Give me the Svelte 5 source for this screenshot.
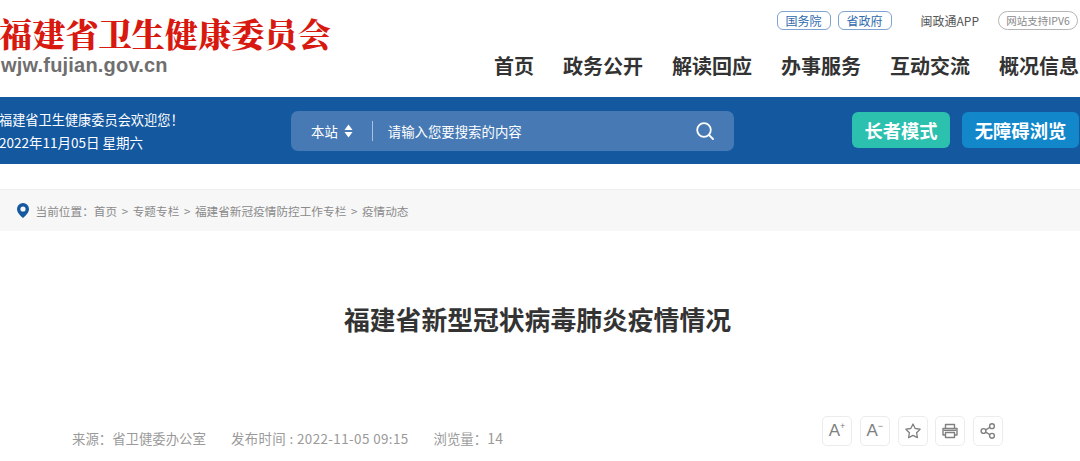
<script>
  const nav = ['首页', '政务公开', '解读回应', '办事服务', '互动交流', '概况信息'];
  const crumbs = ['首页', '专题专栏', '福建省新冠疫情防控工作专栏', '疫情动态'];
</script>

<div class="page">
  <header class="head">
    <div class="logo">
      <div class="logo-cn">福建省卫生健康委员会</div>
      <div class="logo-en">wjw.fujian.gov.cn</div>
    </div>
    <div class="head-right">
      <div class="toplinks">
        <span class="pill blue">国务院</span>
        <span class="pill blue second">省政府</span>
        <span class="app">闽政通APP</span>
        <span class="pill gray">网站支持IPV6</span>
      </div>
      <nav class="nav">
        {#each nav as item}
          <span>{item}</span>
        {/each}
      </nav>
    </div>
  </header>

  <div class="bar">
    <div class="welcome">
      <div class="hello">福建省卫生健康委员会欢迎您！</div>
      <div>2022年11月05日 星期六</div>
    </div>
    <div class="search">
      <span class="scope">本站</span>
      <svg class="updown" width="9" height="14" viewBox="0 0 9 14"><path d="M4.500 0.500 8.500 6H0.500zM0.500 8H8.500L4.500 13.500z" fill="#fff" /></svg>
      <span class="divider"></span>
      <span class="placeholder">请输入您要搜索的内容</span>
      <svg class="mag" width="18" height="18" viewBox="0 0 18 18" fill="none" stroke="#fff" stroke-width="1.8" stroke-linecap="round"><circle cx="8" cy="8" r="6.800" /><path d="M13 13l4 4" /></svg>
    </div>
    <div class="btns">
      <span class="btn teal">长者模式</span>
      <span class="btn sky">无障碍浏览</span>
    </div>
  </div>

  <div class="crumbs">
    <svg width="12" height="15" viewBox="0 0 12 15"><path fill-rule="evenodd" d="M6 0a6 6 0 0 1 6 6c0 3.600-3.600 7-6 9-2.400-2-6-5.400-6-9a6 6 0 0 1 6-6zm0 3.400a2.600 2.600 0 1 0 0 5.200 2.600 2.600 0 0 0 0-5.200z" fill="#14589f" /></svg>
    <span class="here">当前位置：</span>
    {#each crumbs as c, i}
      {#if i > 0}<span class="sep">&gt;</span>{/if}
      <span>{c}</span>
    {/each}
  </div>

  <h1 class="title">福建省新型冠状病毒肺炎疫情情况</h1>

  <div class="meta">
    <div class="info">
      <span>来源：省卫健委办公室</span>
      <span class="time">发布时间 : 2022-11-05 09:15</span>
      <span>浏览量：<span class="count">14</span></span>
    </div>
    <div class="tools">
      <span class="tool"><span class="a">A<sup>+</sup></span></span>
      <span class="tool"><span class="a">A<sup>−</sup></span></span>
      <span class="tool">
        <svg width="18" height="18" viewBox="0 0 18 18" fill="none" stroke="#808080" stroke-width="1.3" stroke-linejoin="round"><path d="M9 2l2.200 4.500 4.900.700-3.500 3.500.800 4.900L9 13.300l-4.400 2.300.800-4.900L1.900 7.200l4.900-.700z" /></svg>
      </span>
      <span class="tool">
        <svg width="18" height="18" viewBox="0 0 18 18" fill="none" stroke="#808080" stroke-width="1.400" stroke-linejoin="round"><path d="M4.500 6V2.500h9V6M4.500 13H2V6.500h14V13h-2.500" /><path d="M4.500 10.500h9v5h-9z" /><path d="M2.500 8.300h13" /></svg>
      </span>
      <span class="tool">
        <svg width="18" height="18" viewBox="0 0 18 18" fill="none" stroke="#808080" stroke-width="1.400"><circle cx="4.500" cy="9" r="2.400" /><circle cx="13" cy="4.200" r="2.400" /><circle cx="13" cy="13.800" r="2.400" /><path d="M6.600 7.800 10.900 5.400M6.600 10.200l4.300 2.400" /></svg>
      </span>
    </div>
  </div>
</div>

<style>
  :global(body) {
    margin: 0;
    background: #fff;
  }

  .page {
    width: 1080px;
    height: 461px;
    overflow: hidden;
    font-family: "Noto Sans CJK SC", "Liberation Sans", sans-serif;
  }

  .head {
    height: 97px;
    display: flex;
    justify-content: space-between;
  }

  .logo-cn {
    margin-top: 13px;
    margin-left: -1px;
    font-family: "Noto Serif CJK SC", "Noto Sans CJK SC", serif;
    font-size: 33px;
    line-height: 40px;
    font-weight: 900;
    letter-spacing: 0.2px;
    color: #d7190f;
    white-space: nowrap;
  }
  .logo-en {
    font-family: "Liberation Sans", sans-serif;
    font-weight: 700;
    font-size: 20px;
    line-height: 22px;
    color: #6f6f6f;
    margin-top: 1px;
    padding-left: 1px;
    letter-spacing: 0.2px;
  }

  .head-right {
    padding-right: 1px;
    display: flex;
    flex-direction: column;
    align-items: flex-end;
  }

  .toplinks {
    margin-top: 11px;
    padding-right: 1px;
    display: flex;
    align-items: center;
    height: 19px;
    font-size: 12px;
  }
  .pill {
    box-sizing: border-box;
    height: 19px;
    line-height: 17px;
    border-radius: 6px;
    text-align: center;
  }
  .pill.blue {
    width: 54px;
    color: #2f6bad;
    border: 1px solid #7ea3cf;
  }
  .pill.second {
    margin-left: 7px;
  }
  .pill.gray {
    width: 80px;
    color: #8a8a8a;
    border: 1px solid #b5b5b5;
    border-radius: 10px;
    font-size: 10.500px;
  }
  .app {
    margin: 0 19px 0 29px;
    color: #555;
    font-size: 12px;
  }

  .nav {
    margin-top: 21px;
    display: flex;
    gap: 29px;
    font-size: 20px;
    line-height: 30px;
    font-weight: 700;
    color: #333;
  }

  .bar {
    height: 67px;
    background: #14589f;
    display: flex;
    align-items: center;
    color: #fff;
  }

  .welcome {
    width: 292px;
    margin-left: -1px;
    font-size: 13.500px;
    line-height: 23px;
    white-space: nowrap;
  }
  .hello {
    font-size: 13.200px;
  }

  .search {
    box-sizing: border-box;
    width: 443px;
    height: 40px;
    margin-top: 1px;
    padding: 0 20px;
    background: #477ab5;
    border-radius: 7px;
    display: flex;
    align-items: center;
    font-size: 13.400px;
  }
  .updown {
    margin-left: 6px;
  }
  .divider {
    width: 1px;
    height: 20px;
    margin: 0 15px 0 19px;
    background: #a9c1dc;
  }
  .placeholder {
    flex: 1;
  }

  .btns {
    margin-left: auto;
    margin-right: 1px;
    margin-top: -2px;
    display: flex;
    gap: 12px;
  }
  .btn {
    height: 36px;
    line-height: 36px;
    border-radius: 6px;
    font-size: 18.300px;
    font-weight: 700;
    text-align: center;
  }
  .teal {
    width: 98px;
    background: #2cc0ae;
  }
  .sky {
    width: 117px;
    background: #1288cb;
  }

  .crumbs {
    box-sizing: border-box;
    height: 42px;
    margin-top: 25px;
    padding-left: 17px;
    background: #f7f7f7;
    border-top: 1px solid #eeeeee;
    display: flex;
    align-items: center;
    gap: 4.600px;
    font-size: 11.650px;
    color: #8a8a8a;
  }
  .here {
    margin-left: 2px;
    margin-right: -4.600px;
  }

  .title {
    margin: 69px 0 0;
    padding-right: 5px;
    font-size: 25.800px;
    line-height: 38px;
    font-weight: 700;
    color: #333;
    text-align: center;
  }

  .meta {
    margin-top: 76px;
    padding: 0 77px 0 72px;
    display: flex;
    justify-content: space-between;
    align-items: center;
  }
  .info {
    display: flex;
    gap: 25px;
    font-size: 13.400px;
    color: #9a9a9a;
    padding-top: 14px;
  }
  .time {
    letter-spacing: 0.4px;
  }
  .count {
    font-size: 14px;
    letter-spacing: 0.3px;
  }
  .tools {
    display: flex;
    gap: 7.750px;
  }
  .tool {
    box-sizing: border-box;
    width: 30px;
    height: 30px;
    border: 1px solid #ececec;
    border-radius: 5px;
    display: flex;
    align-items: center;
    justify-content: center;
    color: #808080;
  }
  .a {
    font-family: "Liberation Sans", sans-serif;
    font-size: 17px;
    line-height: 20px;
  }
  .a sup {
    font-size: 9px;
    line-height: 0;
    vertical-align: 7px;
  }
</style>
